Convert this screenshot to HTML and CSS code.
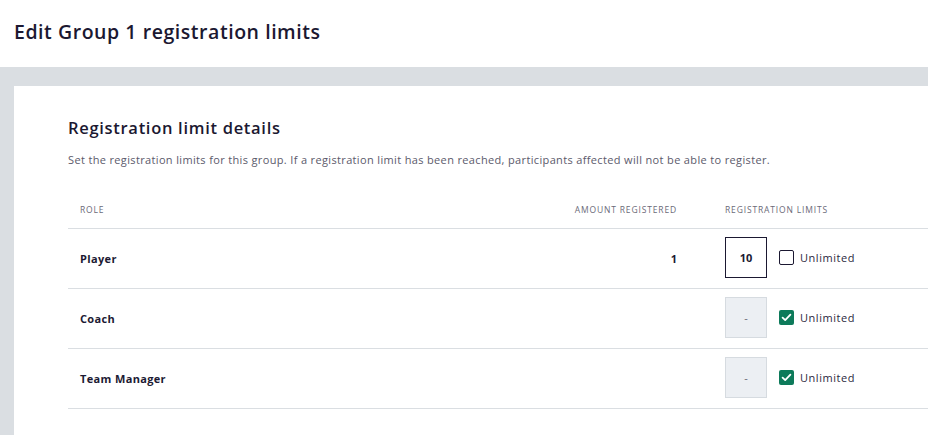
FILE: index.html
```html
<!DOCTYPE html>
<html>
<head>
<meta charset="utf-8">
<link rel="stylesheet" href="styles.css">
</head>
<body>
<header class="page-header">
  <h1 class="page-title">Edit Group 1 registration limits</h1>
</header>
<main class="page-body">
  <section class="card">
    <h2 class="card-title">Registration limit details</h2>
    <p class="card-desc">Set the registration limits for this group. If a registration limit has been reached, participants affected will not be able to register.</p>
    <div class="table">
      <div class="row head">
        <div class="cell role">Role</div>
        <div class="cell amount">Amount registered</div>
        <div class="cell limits">Registration limits</div>
      </div>
      <div class="row">
        <div class="cell role name">Player</div>
        <div class="cell amount num">1</div>
        <div class="cell limits">
          <div class="limit-input active">10</div>
          <label class="check"><span class="box"></span><span class="check-label">Unlimited</span></label>
        </div>
      </div>
      <div class="row">
        <div class="cell role name">Coach</div>
        <div class="cell amount num"></div>
        <div class="cell limits">
          <div class="limit-input disabled">-</div>
          <label class="check"><span class="box checked"><svg viewBox="0 0 15 15" width="15" height="15"><path d="M3.6 7.6 L6.2 10.1 L11.4 4.6" fill="none" stroke="#fff" stroke-width="1.8" stroke-linecap="round" stroke-linejoin="round"/></svg></span><span class="check-label">Unlimited</span></label>
        </div>
      </div>
      <div class="row">
        <div class="cell role name">Team Manager</div>
        <div class="cell amount num"></div>
        <div class="cell limits">
          <div class="limit-input disabled">-</div>
          <label class="check"><span class="box checked"><svg viewBox="0 0 15 15" width="15" height="15"><path d="M3.6 7.6 L6.2 10.1 L11.4 4.6" fill="none" stroke="#fff" stroke-width="1.8" stroke-linecap="round" stroke-linejoin="round"/></svg></span><span class="check-label">Unlimited</span></label>
        </div>
      </div>
    </div>
  </section>
</main>
</body>
</html>
```
FILE: styles.css
```css
* { box-sizing: border-box; }
html, body { margin: 0; padding: 0; }
html { overflow: hidden; }
body {
  width: 928px;
  height: 435px;
  overflow: hidden;
  font-family: "Open Sans", "Liberation Sans", sans-serif;
  color: #1c1a33;
  background: #dadee2;
}
.page-header {
  height: 67px;
  background: #fff;
  display: flex;
  align-items: center;
  padding-left: 14px;
}
.page-title {
  margin: 0;
  margin-top: -4px;
  font-size: 19.5px;
  font-weight: 600;
  letter-spacing: 0.55px;
  color: #1b1831;
}
.page-body {
  height: 368px;
  overflow: hidden;
  padding: 19px 0 0 14px;
}
.card {
  background: #fff;
  height: 349px;
  overflow: hidden;
  padding: 30px 0 0 54px;
}
.card-title {
  margin: 0;
  font-size: 16.5px;
  line-height: 24px;
  font-weight: 600;
  letter-spacing: 0.7px;
  color: #1b1831;
}
.card-desc {
  margin: 12px 0 0;
  font-size: 11px;
  line-height: 16px;
  color: #5b5a6b;
  letter-spacing: 0.35px;
}
.table {
  margin-top: 24px;
  width: 900px;
}
.row {
  display: grid;
  grid-template-columns: 471px 150px 279px;
  height: 60px;
  border-bottom: 1px solid #dadee2;
  align-items: center;
}
.row.head {
  height: 37px;
}
.cell {
  padding: 0 12px 1px;
  font-size: 11px;
  white-space: nowrap;
}
.head .cell {
  font-size: 8.5px;
  text-transform: uppercase;
  color: #6b6a78;
  letter-spacing: 0.85px;
}
.amount { text-align: right; }
.limits {
  padding: 0 12px 2px 36px;
  display: flex;
  align-items: center;
}
.name { font-weight: 700; letter-spacing: 0.35px; }
.num { font-weight: 700; }
.limit-input {
  width: 42px;
  height: 41px;
  display: flex;
  align-items: center;
  justify-content: center;
  font-size: 11px;
  padding-bottom: 1px;
}
.limit-input.active {
  border: 1px solid #1b1831;
  font-weight: 700;
}
.limit-input.disabled {
  background: #eceff3;
  border: 1px solid #d6dbe0;
  color: #6b6a78;
}
.check {
  display: flex;
  align-items: center;
  margin-left: 12px;
}
.box {
  width: 15px;
  height: 15px;
  border: 1px solid #1b1831;
  border-radius: 2px;
  display: block;
}
.box.checked {
  border: none;
  background: #0d7a5a;
}
.box svg { display: block; }
.check-label {
  margin-left: 6px;
  font-size: 11px;
  color: #2b2940;
  letter-spacing: 0.55px;
  padding-bottom: 1px;
}
```
